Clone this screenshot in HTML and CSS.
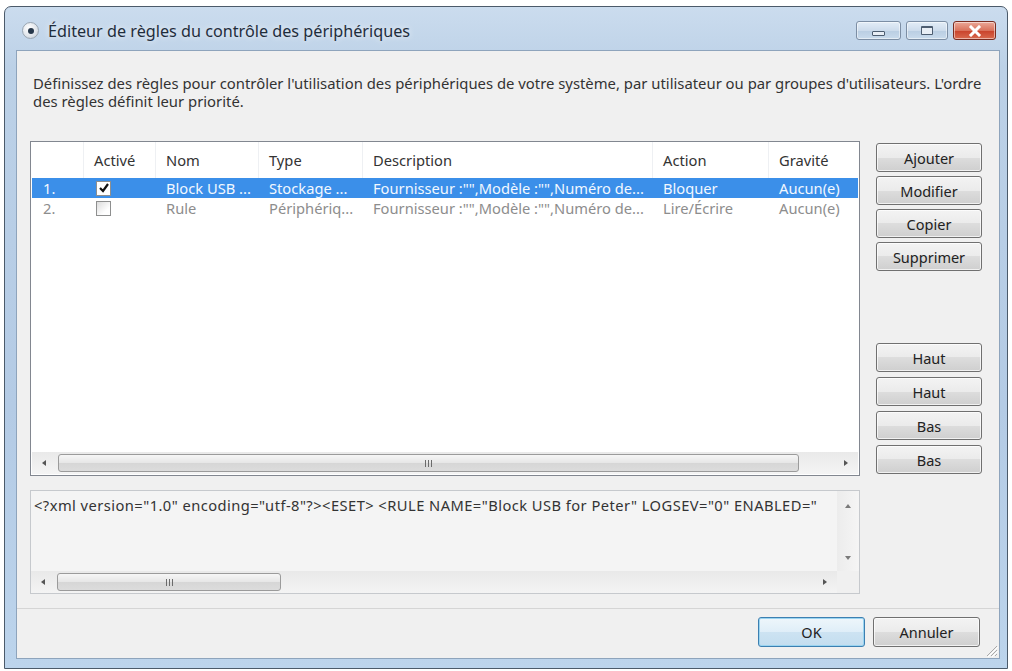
FILE: index.html
```html
<!DOCTYPE html>
<html lang="fr">
<head>
  <meta charset="UTF-8">
  <meta name="viewport" content="width=device-width, initial-scale=1.0">
  <title>Éditeur de règles du contrôle des périphériques</title>
  <link rel="stylesheet" href="styles.css">
</head>
<body>
  <div class="window">
    <div class="titlebar">
      <span class="app-icon"><span class="app-dot"></span></span>
      <span class="title">Éditeur de règles du contrôle des périphériques</span>
      <div class="caption-buttons">
        <span class="cap-btn cap-min"><span class="glyph-min"></span></span>
        <span class="cap-btn cap-max"><span class="glyph-max"></span></span>
        <span class="cap-btn cap-close">
          <svg width="14" height="12" viewBox="0 0 14 12">
            <path d="M3 2 L11 10 M11 2 L3 10" stroke="#fff" stroke-width="3" stroke-linecap="square"/>
          </svg>
        </span>
      </div>
    </div>

    <div class="client">
      <p class="intro">
        <span>Définissez des règles pour contrôler l'utilisation des périphériques de votre système, par utilisateur ou par groupes d'utilisateurs. L'ordre</span>
        <span>des règles définit leur priorité.</span>
      </p>

      <div class="main">
        <div class="left-col">
          <!-- rules list -->
          <div class="listview">
            <div class="lv-row lv-header">
              <span></span>
              <span class="sep">Activé</span>
              <span class="sep">Nom</span>
              <span class="sep">Type</span>
              <span class="sep">Description</span>
              <span class="sep">Action</span>
              <span class="sep">Gravité</span>
            </div>
            <div class="lv-row selected">
              <span class="num">1.</span>
              <span class="chk-cell">
                <span class="checkbox">
                  <svg width="12" height="12" viewBox="0 0 12 12">
                    <path d="M2 6 L5 9 L10 2" stroke="#111" stroke-width="2.2" fill="none"/>
                  </svg>
                </span>
              </span>
              <span>Block USB ...</span>
              <span>Stockage ...</span>
              <span>Fournisseur :"",Modèle :"",Numéro de...</span>
              <span>Bloquer</span>
              <span>Aucun(e)</span>
            </div>
            <div class="lv-row greyed">
              <span class="num">2.</span>
              <span class="chk-cell"><span class="checkbox"></span></span>
              <span>Rule</span>
              <span>Périphériq...</span>
              <span>Fournisseur :"",Modèle :"",Numéro de...</span>
              <span>Lire/Écrire</span>
              <span>Aucun(e)</span>
            </div>
            <div class="lv-fill"></div>
            <div class="hscroll">
              <span class="arrow-btn"><span class="tri-left"></span></span>
              <div class="track">
                <div class="thumb thumb-list"><span class="grip"></span></div>
              </div>
              <span class="arrow-btn"><span class="tri-right"></span></span>
            </div>
          </div>

          <!-- xml preview -->
          <div class="xmlbox">
            <div class="xml-top">
              <div class="xml-text">&lt;?xml version="1.0" encoding="utf-8"?&gt;&lt;ESET&gt; &lt;RULE NAME="Block USB for Peter" LOGSEV="0" ENABLED="</div>
              <div class="vscroll">
                <span class="arrow-btn v"><span class="tri-up"></span></span>
                <span class="arrow-btn v"><span class="tri-down"></span></span>
              </div>
            </div>
            <div class="hscroll">
              <span class="arrow-btn"><span class="tri-left"></span></span>
              <div class="track">
                <div class="thumb thumb-xml"><span class="grip"></span></div>
              </div>
              <span class="arrow-btn"><span class="tri-right"></span></span>
              <span class="corner"></span>
            </div>
          </div>
        </div>

        <div class="side-buttons">
          <div class="btn-group">
            <button class="btn">Ajouter</button>
            <button class="btn">Modifier</button>
            <button class="btn">Copier</button>
            <button class="btn">Supprimer</button>
          </div>
          <div class="btn-group move-group">
            <button class="btn">Haut</button>
            <button class="btn">Haut</button>
            <button class="btn">Bas</button>
            <button class="btn">Bas</button>
          </div>
        </div>
      </div>

      <div class="footer">
        <button class="btn btn-default">OK</button>
        <button class="btn">Annuler</button>
        <svg class="grip-corner" width="14" height="14" viewBox="0 0 14 14">
          <path d="M13 3 L3 13 M13 7 L7 13 M13 11 L11 13" stroke="#a9a9a9" stroke-width="1"/>
          <path d="M14 4 L4 14 M14 8 L8 14" stroke="#fff" stroke-width="1"/>
        </svg>
      </div>
    </div>
  </div>
</body>
</html>
```

FILE: styles.css
```css
/* Windows 7 style dialog */

body {
  margin: 0;
  background-color: #fff;
  font-family: "Noto Sans", "Open Sans", sans-serif;
  font-size: 14.7px;
  color: #333;
}

.window {
  margin: 6px 0 0 4px;
  width: 1004px;
  height: 663px;
  box-sizing: border-box;
  border: 1px solid #4b5a6a;
  border-radius: 7px 7px 0 0;
  background: linear-gradient(#cbdcee, #bcd1e7 60px, #b4cbe5 400px, #bcd4ec);
  display: flex;
  flex-direction: column;
}

/* Title bar */

.titlebar {
  height: 43px;
  display: flex;
  align-items: center;
  padding-left: 17px;
  position: relative;
}

.app-icon {
  width: 15px;
  height: 15px;
  border-radius: 50%;
  border: 1px solid #9aa6b2;
  background: radial-gradient(circle at 40% 35%, #fff, #dfe4ea 60%, #b8c1cb);
  display: flex;
  align-items: center;
  justify-content: center;
  margin-top: 4px;
}

.app-dot {
  width: 6px;
  height: 6px;
  border-radius: 50%;
  background: #27384a;
}

.title {
  margin-left: 9px;
  margin-top: 4px;
  font-size: 16.2px;
  color: #1f2d3c;
  text-shadow: 0 0 6px rgba(255, 255, 255, 0.9);
}

.caption-buttons {
  position: absolute;
  top: 14px;
  right: 11px;
  display: flex;
  gap: 5px;
}

.cap-btn {
  height: 17px;
  border: 1px solid #7c8ea4;
  border-radius: 3px;
  display: flex;
  align-items: center;
  justify-content: center;
  background: linear-gradient(#e3edf7, #cddcec 50%, #b9cde2 50%, #c9dbec);
  box-shadow: inset 0 0 0 1px rgba(255, 255, 255, 0.5);
}

.cap-min {
  width: 43px;
}

.cap-max {
  width: 40px;
}

.cap-close {
  width: 41px;
  border-color: #7a2c20;
  background: linear-gradient(#eba898, #d9725c 50%, #c8412a 50%, #d96a4e);
}

.glyph-min {
  width: 11px;
  height: 3px;
  border: 1px solid #4d5d70;
  border-radius: 1px;
  background: #e8eef5;
  margin-top: 5px;
}

.glyph-max {
  width: 10px;
  height: 6px;
  border: 1px solid #4d5d70;
  border-top-width: 2px;
  border-radius: 1px;
  background: #e8eef5;
}

/* Client area */

.client {
  flex: 1;
  margin: 0 7px 9px 11px;
  background-color: #f0f0f0;
  border: 1px solid #8ea4bc;
  display: flex;
  flex-direction: column;
}

.intro {
  margin: 23px 10px 0 16px;
  font-size: 14.85px;
  line-height: 18px;
}

.intro span {
  display: block;
  white-space: nowrap;
}

.main {
  display: flex;
  padding-left: 13px;
  margin-top: 31px;
}

.left-col {
  width: 830px;
  display: flex;
  flex-direction: column;
  gap: 14px;
}

/* List view */

.listview {
  height: 335px;
  box-sizing: border-box;
  border: 1px solid #828790;
  background-color: #fff;
  display: flex;
  flex-direction: column;
}

.lv-row {
  display: grid;
  grid-template-columns: 52px 72px 103px 104px 290px 116px 1fr;
  height: 20px;
  align-items: center;
  margin: 0 1px;
}

.lv-row span {
  padding-left: 10px;
  white-space: nowrap;
  overflow: hidden;
}

.lv-header {
  height: 36px;
  margin: 0;
  color: #333;
}

.lv-header .sep {
  border-left: 1px solid #eef0f3;
  height: 100%;
  display: flex;
  align-items: center;
}

.lv-row .num {
  padding-left: 11px;
}

.lv-row .chk-cell {
  padding-left: 12px;
  display: flex;
  align-items: center;
}

.checkbox {
  width: 13px;
  height: 13px;
  border: 1px solid #8e8f8f;
  background: linear-gradient(135deg, #dcdcdc, #fff 70%);
  display: flex;
  align-items: center;
  justify-content: center;
  padding: 0 !important;
}

.selected {
  background-color: #3b8fe9;
  color: #f2f8ff;
}

.selected .checkbox {
  background: #fff;
}

.greyed {
  color: #8d8d8d;
}

.lv-fill {
  flex: 1;
}

/* Scroll bars */

.hscroll {
  height: 22px;
  display: flex;
  align-items: center;
  background: linear-gradient(#e9e9e9, #f4f4f4);
  margin: 0 1px 1px;
}

.arrow-btn {
  width: 24px;
  height: 22px;
  display: flex;
  align-items: center;
  justify-content: center;
}

.track {
  flex: 1;
  height: 100%;
  display: flex;
  align-items: center;
}

.thumb {
  height: 18px;
  box-sizing: border-box;
  border: 1px solid #9b9b9b;
  border-radius: 3px;
  background: linear-gradient(#f6f6f6, #e6e6e6 50%, #d6d6d6 50%, #dcdcdc);
  display: flex;
  align-items: center;
  justify-content: center;
}

.thumb-list {
  width: 741px;
  margin-left: 2px;
}

.thumb-xml {
  width: 224px;
  margin-left: 2px;
}

.grip {
  width: 7px;
  height: 7px;
  background: repeating-linear-gradient(90deg, #6b6b6b 0 1px, transparent 1px 3px);
}

.tri-left,
.tri-right,
.tri-up,
.tri-down {
  width: 0;
  height: 0;
  border: 3.5px solid transparent;
}

.tri-left {
  border-right: 4px solid #555;
  border-left: 0;
}

.tri-right {
  border-left: 4px solid #555;
  border-right: 0;
}

.tri-up {
  border-bottom: 4px solid #7a7a7a;
  border-top: 0;
}

.tri-down {
  border-top: 4px solid #7a7a7a;
  border-bottom: 0;
}

/* XML box */

.xmlbox {
  height: 104px;
  box-sizing: border-box;
  border: 1px solid #c6c9cd;
  background-color: #f4f4f4;
  display: flex;
  flex-direction: column;
}

.xml-top {
  flex: 1;
  display: flex;
}

.xml-text {
  flex: 1;
  padding: 4px 0 0 3px;
  white-space: nowrap;
  overflow: hidden;
  letter-spacing: 0.45px;
}

.vscroll {
  width: 22px;
  display: flex;
  flex-direction: column;
  justify-content: space-between;
  padding: 6px 0 4px;
  background: linear-gradient(90deg, #ececec, #f5f5f5);
}

.vscroll .arrow-btn {
  width: 22px;
  height: 18px;
}

.xmlbox .hscroll {
  margin: 0;
}

.corner {
  width: 22px;
  height: 22px;
  background-color: #f0f0f0;
}

/* Buttons */

.side-buttons {
  margin-left: 16px;
  padding-top: 2px;
}

.btn-group {
  display: flex;
  flex-direction: column;
  gap: 4px;
}

.move-group {
  margin-top: 72px;
  gap: 5px;
}

.btn {
  width: 106px;
  height: 29px;
  box-sizing: border-box;
  font-family: "Noto Sans", "Open Sans", sans-serif;
  font-size: 14.5px;
  color: #222;
  border: 1px solid #707070;
  border-radius: 3px;
  background: linear-gradient(#f3f3f3, #ebebeb 50%, #dddddd 50%, #cfcfcf);
  box-shadow: inset 0 0 0 1px rgba(255, 255, 255, 0.7);
  padding: 0;
  cursor: pointer;
}

/* Footer */

.footer {
  flex: 1;
  margin-top: 14px;
  border-top: 1px solid #d5d5d5;
  display: flex;
  justify-content: flex-end;
  align-items: flex-start;
  gap: 8px;
  padding: 8px 19px 0 0;
  position: relative;
}

.footer .btn {
  width: 107px;
  height: 30px;
}

.btn-default {
  border-color: #3c7fb1;
  background: linear-gradient(#eef6fb, #dfeef8 50%, #cde3f2 50%, #c3ddef);
  box-shadow: inset 0 0 0 1px #9ad4f0;
}

.grip-corner {
  position: absolute;
  right: 1px;
  bottom: 1px;
}
```
